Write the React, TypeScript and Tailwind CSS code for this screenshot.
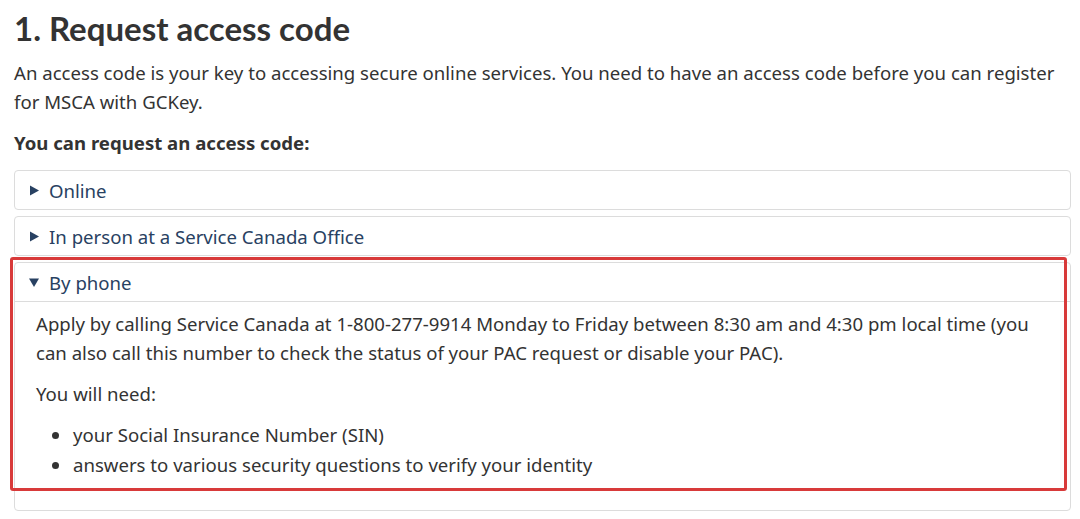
import { ReactNode } from 'react'

function Tri({ open }: { open?: boolean }) {
  return (
    <svg width="10" height="11" viewBox="0 0 10 11" className="shrink-0 fill-[#284162]">
      {open ? <polygon points="0,1.5 10,1.5 5,10" /> : <polygon points="1,0.5 10,5.5 1,10.5" />}
    </svg>
  )
}

function Details({ title, open, children }: { title: string; open?: boolean; children?: ReactNode }) {
  return (
    <div className="rounded-[4px] border border-[#dcdcdc]">
      <div className="flex h-[38px] items-center gap-[10px] pl-[14px] text-[#284162]">
        <Tri open={open} />
        <span>{title}</span>
      </div>
      {open && <div className="border-t border-[#dcdcdc] px-[21px] pt-[7px] pb-[31px]">{children}</div>}
    </div>
  )
}

export default function App() {
  return (
    <div className="relative min-h-[519px] bg-white pl-[14px] pr-[9px] pt-[6px] text-[18.6px] leading-[29px] text-[#333] font-['Noto_Sans',sans-serif]">
      <h2 className="font-['Lato',sans-serif] text-[33px] font-bold leading-[44px] text-[#333]">
        1. Request access code
      </h2>
      <p className="mt-[8px]">
        An access code is your key to accessing secure online services. You need to have an access code before you can register
        for MSCA with GCKey.
      </p>
      <p className="mt-[12px] font-bold">You can request an access code:</p>
      <div className="mt-[13px] flex flex-col gap-[6px]">
        <Details title="Online" />
        <Details title="In person at a Service Canada Office" />
        <Details title="By phone" open>
          <p>
            Apply by calling Service Canada at 1-800-277-9914 Monday to Friday between 8:30 am and 4:30 pm local time (you
            can also call this number to check the status of your PAC request or disable your PAC).
          </p>
          <p className="mt-[12px]">You will need:</p>
          <ul className="mt-[12px] list-disc pl-[36px]">
            <li className="pl-[1px]">your Social Insurance Number (SIN)</li>
            <li className="mt-[1px] pl-[1px]">answers to various security questions to verify your identity</li>
          </ul>
        </Details>
      </div>
      <div className="pointer-events-none absolute left-[10px] top-[257px] h-[234px] w-[1057px] rounded-[3px] border-[3px] border-[#d83a3a]" />
    </div>
  )
}
